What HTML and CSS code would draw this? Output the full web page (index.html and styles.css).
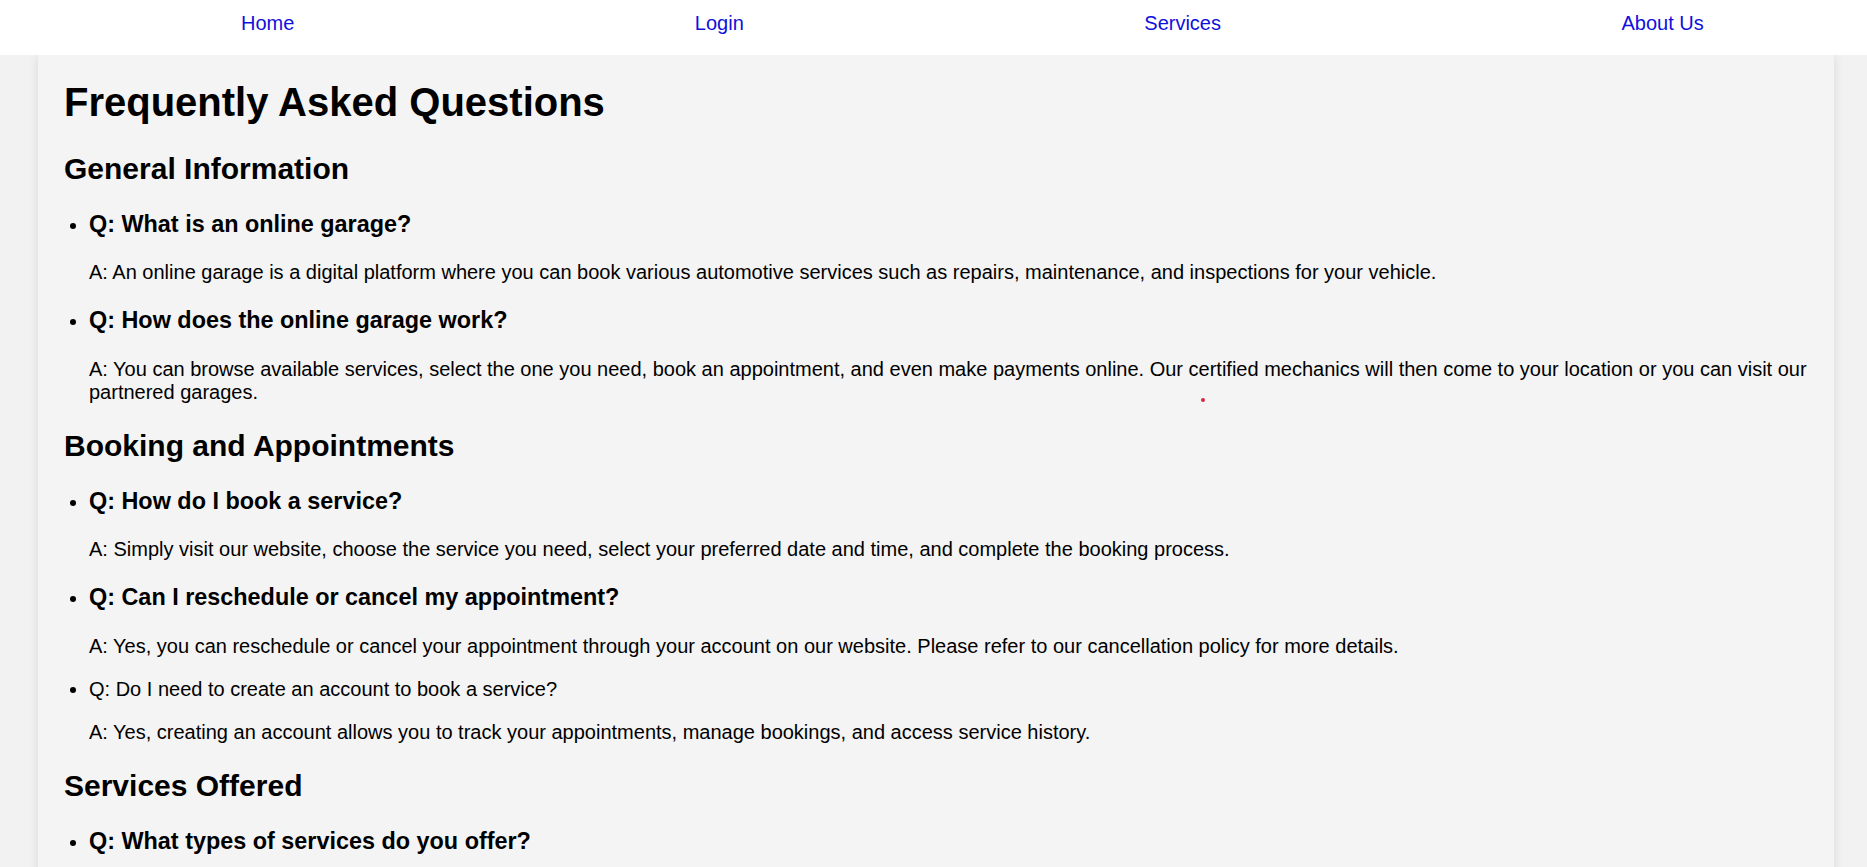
FILE: index.html
```html
<!DOCTYPE html>
<html lang="en">
<head>
<meta charset="utf-8">
<title>FAQ - Online Garage</title>
<link rel="stylesheet" href="styles.css">
</head>
<body>
<nav class="topnav">
  <ul class="topnav-list">
    <li><a href="#">Home</a></li>
    <li><a href="#">Login</a></li>
    <li><a href="#">Services</a></li>
    <li><a href="#">About Us</a></li>
  </ul>
</nav>
<main class="faq">
  <h1>Frequently Asked Questions</h1>

  <h2>General Information</h2>
  <ul class="qa-list">
    <li>
      <h3>Q: What is an online garage?</h3>
      <p>A: An online garage is a digital platform where you can book various automotive services such as repairs, maintenance, and inspections for your vehicle.</p>
    </li>
    <li>
      <h3>Q: How does the online garage work?</h3>
      <p>A: You can browse available services, select the one you need, book an appointment, and even make payments online. Our certified mechanics will then come to your location or you can visit our partnered garages.</p>
    </li>
  </ul>

  <h2>Booking and Appointments</h2>
  <ul class="qa-list">
    <li>
      <h3>Q: How do I book a service?</h3>
      <p>A: Simply visit our website, choose the service you need, select your preferred date and time, and complete the booking process.</p>
    </li>
    <li>
      <h3>Q: Can I reschedule or cancel my appointment?</h3>
      <p>A: Yes, you can reschedule or cancel your appointment through your account on our website. Please refer to our cancellation policy for more details.</p>
    </li>
    <li>Q: Do I need to create an account to book a service?
      <p>A: Yes, creating an account allows you to track your appointments, manage bookings, and access service history.</p>
    </li>
  </ul>

  <h2>Services Offered</h2>
  <ul class="qa-list">
    <li>
      <h3>Q: What types of services do you offer?</h3>
      <p>A: We offer a wide range of services including oil changes, brake repairs, tire replacements, engine diagnostics, and general maintenance.</p>
    </li>
  </ul>
  <span class="dot"></span>
</main>
</body>
</html>
```

FILE: styles.css
```css
html, body {
  margin: 0;
  padding: 0;
}

body {
  background: #f2f2f2;
  font-family: "Liberation Sans", Arial, sans-serif;
  font-size: 20px;
  color: #000;
  height: 867px;
  overflow: hidden;
}

.topnav {
  background: #ffffff;
  height: 55px;
  box-sizing: border-box;
  padding-top: 12px;
  position: relative;
  z-index: 2;
}

.topnav-list {
  list-style: none;
  margin: 0;
  padding: 0 0 0 241px;
  display: flex;
  gap: 400.5px;
}

.topnav-list a {
  color: #1010dd;
  text-decoration: none;
}

.faq {
  position: relative;
  background: #f4f4f4;
  box-shadow: 0 0 10px rgba(0, 0, 0, 0.1);
  margin: 0 33px 0 38px;
  padding: 25px 25px 40px 26px;
  min-height: 900px;
}

.faq h1 {
  font-size: 40px;
  margin: 0 0 26.8px;
}

.faq h2 {
  font-size: 30px;
  margin: 24.9px 0;
}

.faq h3 {
  font-size: 23.4px;
  margin: 23.4px 0;
}

.qa-list {
  margin: 20px 0;
  padding-left: 25px;
}

.qa-list p {
  margin: 20px 0;
}

.dot {
  position: absolute;
  left: 1163px;
  top: 343px;
  width: 4px;
  height: 4px;
  border-radius: 50%;
  background: #d42a3c;
}
```
